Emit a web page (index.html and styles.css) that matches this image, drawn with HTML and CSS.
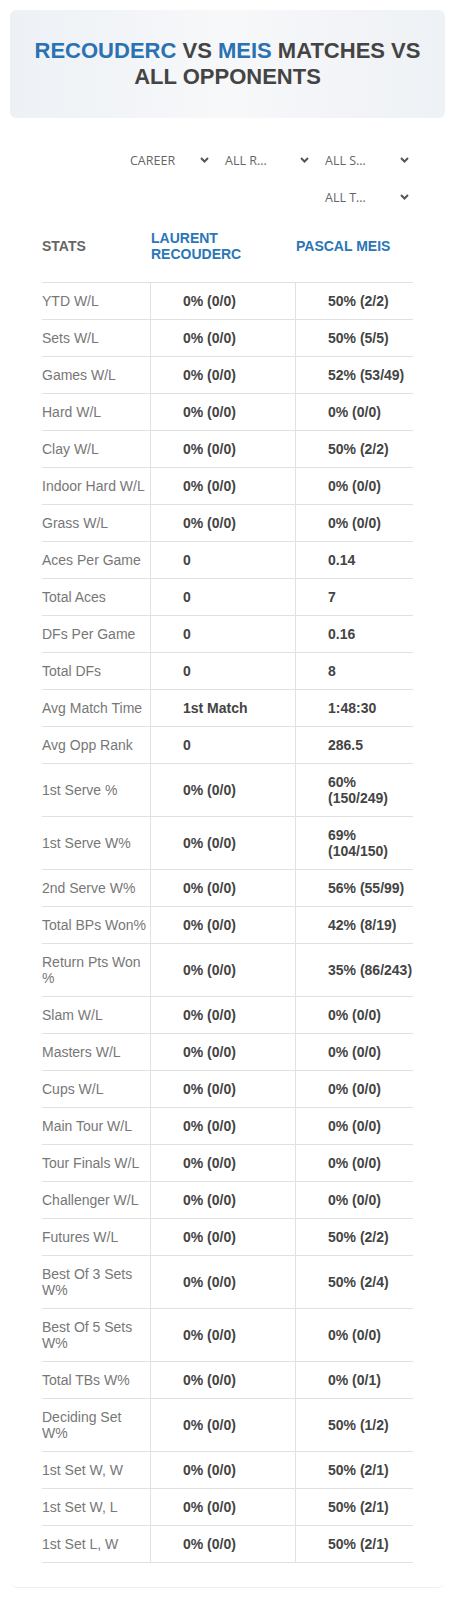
FILE: index.html
```html
<!DOCTYPE html>
<html>
<head>
    <meta charset="UTF-8">
    <title>Recouderc vs Meis</title>
    <link rel="stylesheet" href="styles.css">
</head>
<body>
    <div class="card">
        <div class="title-box">
            <h1><span class="blue">Recouderc</span> vs <span class="blue">Meis</span> matches vs all opponents</h1>
        </div>

        <div class="content">
            <div class="filters">
                <div class="filter first"><span class="filter-text">Career</span><svg class="chev" width="9" height="6" viewBox="0 0 9 6"><polyline points="1,1 4.5,4.5 8,1" /></svg></div>
                <div class="filter"><span class="filter-text">All R&hellip;</span><svg class="chev" width="9" height="6" viewBox="0 0 9 6"><polyline points="1,1 4.5,4.5 8,1" /></svg></div>
                <div class="filter"><span class="filter-text">All S&hellip;</span><svg class="chev" width="9" height="6" viewBox="0 0 9 6"><polyline points="1,1 4.5,4.5 8,1" /></svg></div>
                <div class="filter"><span class="filter-text">All T&hellip;</span><svg class="chev" width="9" height="6" viewBox="0 0 9 6"><polyline points="1,1 4.5,4.5 8,1" /></svg></div>
            </div>

            <div class="stats">
                <div class="row head">
                    <div class="cell label-head">Stats</div>
                    <div class="cell player">Laurent Recouderc</div>
                    <div class="cell player">Pascal Meis</div>
                </div>
                <div class="row"><div class="cell label">YTD W/L</div><div class="cell val">0% (0/0)</div><div class="cell val">50% (2/2)</div></div>
                <div class="row"><div class="cell label">Sets W/L</div><div class="cell val">0% (0/0)</div><div class="cell val">50% (5/5)</div></div>
                <div class="row"><div class="cell label">Games W/L</div><div class="cell val">0% (0/0)</div><div class="cell val">52% (53/49)</div></div>
                <div class="row"><div class="cell label">Hard W/L</div><div class="cell val">0% (0/0)</div><div class="cell val">0% (0/0)</div></div>
                <div class="row"><div class="cell label">Clay W/L</div><div class="cell val">0% (0/0)</div><div class="cell val">50% (2/2)</div></div>
                <div class="row"><div class="cell label">Indoor Hard W/L</div><div class="cell val">0% (0/0)</div><div class="cell val">0% (0/0)</div></div>
                <div class="row"><div class="cell label">Grass W/L</div><div class="cell val">0% (0/0)</div><div class="cell val">0% (0/0)</div></div>
                <div class="row"><div class="cell label">Aces Per Game</div><div class="cell val">0</div><div class="cell val">0.14</div></div>
                <div class="row"><div class="cell label">Total Aces</div><div class="cell val">0</div><div class="cell val">7</div></div>
                <div class="row"><div class="cell label">DFs Per Game</div><div class="cell val">0</div><div class="cell val">0.16</div></div>
                <div class="row"><div class="cell label">Total DFs</div><div class="cell val">0</div><div class="cell val">8</div></div>
                <div class="row"><div class="cell label">Avg Match Time</div><div class="cell val">1st Match</div><div class="cell val">1:48:30</div></div>
                <div class="row"><div class="cell label">Avg Opp Rank</div><div class="cell val">0</div><div class="cell val">286.5</div></div>
                <div class="row"><div class="cell label">1st Serve %</div><div class="cell val">0% (0/0)</div><div class="cell val">60% (150/249)</div></div>
                <div class="row"><div class="cell label">1st Serve W%</div><div class="cell val">0% (0/0)</div><div class="cell val">69% (104/150)</div></div>
                <div class="row"><div class="cell label">2nd Serve W%</div><div class="cell val">0% (0/0)</div><div class="cell val">56% (55/99)</div></div>
                <div class="row"><div class="cell label">Total BPs Won%</div><div class="cell val">0% (0/0)</div><div class="cell val">42% (8/19)</div></div>
                <div class="row"><div class="cell label">Return Pts Won %</div><div class="cell val">0% (0/0)</div><div class="cell val">35% (86/243)</div></div>
                <div class="row"><div class="cell label">Slam W/L</div><div class="cell val">0% (0/0)</div><div class="cell val">0% (0/0)</div></div>
                <div class="row"><div class="cell label">Masters W/L</div><div class="cell val">0% (0/0)</div><div class="cell val">0% (0/0)</div></div>
                <div class="row"><div class="cell label">Cups W/L</div><div class="cell val">0% (0/0)</div><div class="cell val">0% (0/0)</div></div>
                <div class="row"><div class="cell label">Main Tour W/L</div><div class="cell val">0% (0/0)</div><div class="cell val">0% (0/0)</div></div>
                <div class="row"><div class="cell label">Tour Finals W/L</div><div class="cell val">0% (0/0)</div><div class="cell val">0% (0/0)</div></div>
                <div class="row"><div class="cell label">Challenger W/L</div><div class="cell val">0% (0/0)</div><div class="cell val">0% (0/0)</div></div>
                <div class="row"><div class="cell label">Futures W/L</div><div class="cell val">0% (0/0)</div><div class="cell val">50% (2/2)</div></div>
                <div class="row"><div class="cell label">Best Of 3 Sets W%</div><div class="cell val">0% (0/0)</div><div class="cell val">50% (2/4)</div></div>
                <div class="row"><div class="cell label">Best Of 5 Sets W%</div><div class="cell val">0% (0/0)</div><div class="cell val">0% (0/0)</div></div>
                <div class="row"><div class="cell label">Total TBs W%</div><div class="cell val">0% (0/0)</div><div class="cell val">0% (0/1)</div></div>
                <div class="row"><div class="cell label">Deciding Set W%</div><div class="cell val">0% (0/0)</div><div class="cell val">50% (1/2)</div></div>
                <div class="row"><div class="cell label">1st Set W, W</div><div class="cell val">0% (0/0)</div><div class="cell val">50% (2/1)</div></div>
                <div class="row"><div class="cell label">1st Set W, L</div><div class="cell val">0% (0/0)</div><div class="cell val">50% (2/1)</div></div>
                <div class="row"><div class="cell label">1st Set L, W</div><div class="cell val">0% (0/0)</div><div class="cell val">50% (2/1)</div></div>
            </div>
        </div>
    </div>
</body>
</html>
```

FILE: styles.css
```css
body {
    margin: 0;
    background-color: #fff;
    font-family: "Liberation Sans", Arial, sans-serif;
    color: #444;
}
.card {
    margin: 10px;
    background-color: #fff;
    border-radius: 8px;
    box-shadow: 0 2px 1px -1px rgba(0, 0, 0, 0.07);
    padding-bottom: 24px;
}
.title-box {
    background: linear-gradient(90deg, #edf1f5 0%, #f7f8fa 50%, #eef1f5 100%);
    border-radius: 6px;
    padding: 28px 20px;
    text-align: center;
}
.title-box h1 {
    margin: 0;
    font-size: 22px;
    line-height: 26px;
    font-weight: bold;
    text-transform: uppercase;
    color: #444;
}
.blue {
    color: #2a72b2;
}
.content {
    padding: 0 32px;
}
.filters {
    display: flex;
    flex-wrap: wrap;
    justify-content: flex-end;
    row-gap: 7px;
    margin-top: 27px;
}
.filter {
    box-sizing: border-box;
    width: 100px;
    height: 30px;
    padding: 0 4px 0 12px;
    display: flex;
    align-items: center;
    justify-content: space-between;
}
.filter.first {
    padding-left: 17px;
}
.filter-text {
    white-space: nowrap;
    font-family: "Open Sans", sans-serif;
    font-size: 12.5px;
    text-transform: uppercase;
    color: #666;
}
.chev polyline {
    fill: none;
    stroke: #555;
    stroke-width: 2;
}
.row {
    display: grid;
    grid-template-columns: 108px 145px 118px;
    border-bottom: 1px solid #e1e1e1;
    font-size: 14px;
    line-height: 16px;
}
.cell {
    display: flex;
    align-items: center;
}
.head {
    padding: 18px 0 20px;
    font-weight: bold;
    text-transform: uppercase;
}
.label-head {
    color: #666;
}
.player {
    color: #2a76b6;
    padding-left: 1px;
}
.label {
    padding: 10px 0;
    color: #777;
}
.val {
    padding: 10px 0 10px 32px;
    border-left: 1px solid #e1e1e1;
    font-weight: bold;
    color: #444;
}
```
